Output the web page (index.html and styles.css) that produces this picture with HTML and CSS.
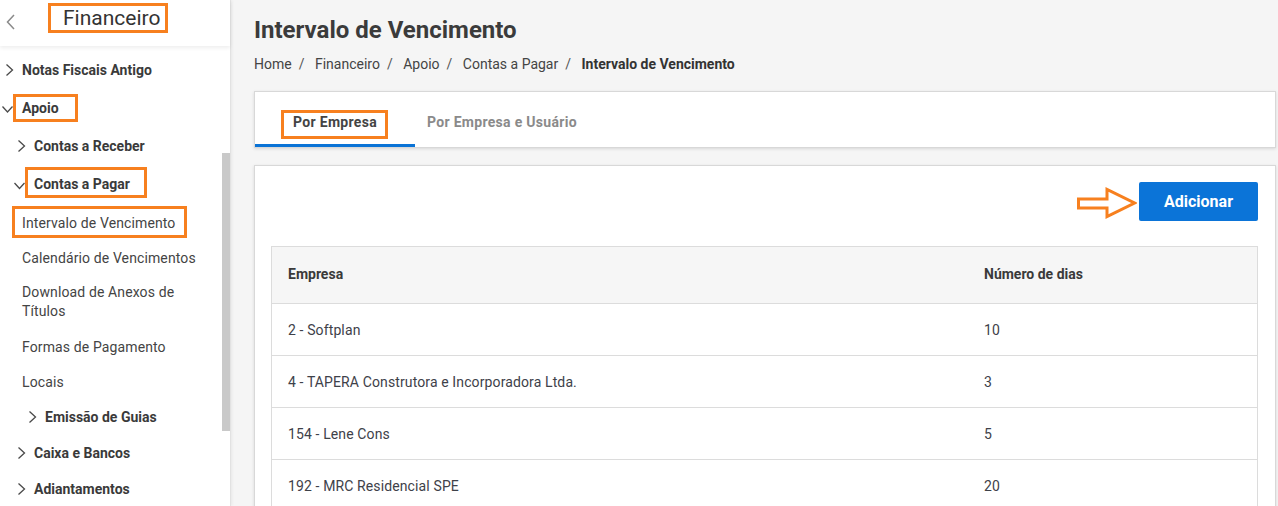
FILE: index.html
```html
<!DOCTYPE html>
<html lang="pt-BR">
<head>
<meta charset="utf-8">
<title>Intervalo de Vencimento</title>
<link rel="stylesheet" href="styles.css">
</head>
<body>
<div class="app">
  <aside class="sidebar">
    <div class="side-head">
      <svg class="back" width="16" height="20" viewBox="0 0 16 20"><path d="M11 3 L4.5 10 L11 17" fill="none" stroke="#8a8a8a" stroke-width="1.5"/></svg>
      <span class="side-title hl hl-fin">Financeiro</span>
    </div>
    <nav class="menu">
      <div class="item lvl1">
        <svg class="chev" width="16" height="16" viewBox="0 0 16 16"><path d="M2.5 2.5 L8.5 8 L2.5 13.5" /></svg>
        <span>Notas Fiscais Antigo</span>
      </div>
      <div class="item lvl1">
        <svg class="chev" width="16" height="16" viewBox="0 0 16 16"><path d="M-1.5 6.5 L3.5 12 L8.5 6.5" /></svg>
        <span class="hl hl-apoio">Apoio</span>
      </div>
      <div class="item lvl2">
        <svg class="chev" width="16" height="16" viewBox="0 0 16 16"><path d="M2.5 2.5 L8.5 8 L2.5 13.5" /></svg>
        <span>Contas a Receber</span>
      </div>
      <div class="item lvl2">
        <svg class="chev" width="16" height="16" viewBox="0 0 16 16"><path d="M-1.5 7 L3.5 12.5 L8.5 7" /></svg>
        <span class="hl hl-pagar">Contas a Pagar</span>
      </div>
      <div class="children">
        <div class="leaf"><span class="hl hl-int">Intervalo de Vencimento</span></div>
        <div class="leaf">Calendário de Vencimentos</div>
        <div class="leaf two">Download de Anexos de<br>Títulos</div>
        <div class="leaf">Formas de Pagamento</div>
        <div class="leaf">Locais</div>
        <div class="item lvl3">
          <svg class="chev" width="16" height="16" viewBox="0 0 16 16"><path d="M2.5 2.5 L8.5 8 L2.5 13.5" /></svg>
          <span>Emissão de Guias</span>
        </div>
      </div>
      <div class="item lvl2 short first-after">
        <svg class="chev" width="16" height="16" viewBox="0 0 16 16"><path d="M2.5 2.5 L8.5 8 L2.5 13.5" /></svg>
        <span>Caixa e Bancos</span>
      </div>
      <div class="item lvl2 short">
        <svg class="chev" width="16" height="16" viewBox="0 0 16 16"><path d="M2.5 2.5 L8.5 8 L2.5 13.5" /></svg>
        <span>Adiantamentos</span>
      </div>
    </nav>
    <div class="scroll-thumb"></div>
  </aside>

  <main class="main">
    <h1 class="title">Intervalo de Vencimento</h1>
    <div class="crumbs">
      <span>Home</span><span class="sep">/</span>
      <span>Financeiro</span><span class="sep">/</span>
      <span>Apoio</span><span class="sep">/</span>
      <span>Contas a Pagar</span><span class="sep">/</span>
      <span class="current">Intervalo de Vencimento</span>
    </div>

    <div class="card tabs">
      <div class="tab active"><span class="hl hl-tab">Por Empresa</span></div>
      <div class="tab">Por Empresa e Usuário</div>
    </div>

    <div class="card content">
      <div class="toolbar">
        <svg class="arrow" width="61" height="32" viewBox="0 0 61 32"><polygon points="2.5,12 31,12 31,2.5 58.5,16 31,29.5 31,21 2.5,21" fill="none" stroke="#f7801f" stroke-width="3" stroke-linejoin="miter"/></svg>
        <button class="btn">Adicionar</button>
      </div>
      <div class="grid">
        <div class="row head">
          <div class="cell">Empresa</div>
          <div class="cell">Número de dias</div>
        </div>
        <div class="row">
          <div class="cell">2 - Softplan</div>
          <div class="cell">10</div>
        </div>
        <div class="row">
          <div class="cell">4 - TAPERA Construtora e Incorporadora Ltda.</div>
          <div class="cell">3</div>
        </div>
        <div class="row">
          <div class="cell">154 - Lene Cons</div>
          <div class="cell">5</div>
        </div>
        <div class="row">
          <div class="cell">192 - MRC Residencial SPE</div>
          <div class="cell">20</div>
        </div>
      </div>
    </div>
  </main>
</div>
</body>
</html>
```

FILE: styles.css
```css
* { box-sizing: border-box; }
html, body { margin: 0; padding: 0; }
body {
  font-family: Roboto, "Liberation Sans", Arial, sans-serif;
  font-size: 14px;
  color: #3d3d3d;
  background: #f5f5f5;
  width: 1278px;
  height: 506px;
  overflow: hidden;
}
.app { display: flex; height: 506px; }

/* annotation boxes */
.hl { position: relative; }
.hl::after {
  content: "";
  position: absolute;
  border: 3px solid #f7801f;
  pointer-events: none;
}
.hl-fin::after { top: -3px; bottom: -3px; left: -15px; right: -8px; }
.hl-apoio::after { top: -6px; bottom: -6px; left: -9px; right: -19px; }
.hl-pagar::after { top: -9px; bottom: -6px; left: -9px; right: -17px; }
.hl-int::after { top: -9px; bottom: -7px; left: -10px; right: -12px; }
.hl-tab::after { top: -4px; bottom: -9px; left: -12px; right: -11px; }

/* sidebar */
.sidebar {
  position: relative;
  width: 231px;
  flex: 0 0 231px;
  background: #fff;
  border-right: 1px solid #e2e2e2;
  box-shadow: 1px 0 3px rgba(0,0,0,0.06);
  z-index: 1;
}
.side-head {
  height: 46px;
  display: flex;
  align-items: center;
  padding-left: 3px;
  box-shadow: 0 2px 4px rgba(0,0,0,0.07);
}
.back { margin-top: -2px; }
.side-title {
  font-size: 21px;
  color: #333;
  margin-left: 44px;
  margin-top: -11px;
  line-height: 24px;
}
.menu { padding-top: 5px; }
.item {
  display: flex;
  align-items: center;
  height: 38px;
  font-weight: 700;
  color: #3a3a3a;
}
.item.short { height: 36px; }
.item.first-after { margin-top: 1px; }
.chev { flex: 0 0 16px; margin-right: 2px; overflow: visible; }
.chev path { fill: none; stroke: #4a4a4a; stroke-width: 1.3; }
.lvl1 { padding-left: 4px; }
.lvl2 { padding-left: 16px; }
.lvl3 { padding-left: 27px; height: 35px; }
.children { padding-top: 2px; }
.leaf {
  padding: 8px 0 8px 22px;
  line-height: 19px;
  color: #444;
  letter-spacing: 0.12px;
}
.leaf:not(.two) { padding-top: 9px; padding-bottom: 7px; }

.scroll-thumb {
  position: absolute;
  left: 222px;
  top: 153px;
  width: 8px;
  height: 278px;
  background: #c9c9c9;
}

/* main */
.main {
  flex: 1;
  padding: 16px 2px 0 23px;
  min-width: 0;
}
.title {
  margin: 0;
  font-size: 24px;
  line-height: 28px;
  font-weight: 700;
  color: #3b3b3b;
}
.crumbs {
  margin-top: 10px;
  line-height: 20px;
  color: #444;
}
.crumbs .sep { margin: 0 7px; color: #555; }
.crumbs .current { font-weight: 700; color: #333; }

.card {
  background: #fff;
  border: 1px solid #d8d8d8;
  box-shadow: 0 1px 3px rgba(0,0,0,0.12);
}
.tabs {
  margin-top: 17px;
  display: flex;
  height: 57px;
}
.tab {
  min-width: 160px;
  height: 55px;
  padding: 8px 12px 0;
  display: flex;
  align-items: center;
  justify-content: center;
  font-weight: 700;
  color: #8a8a8a;
  letter-spacing: 0.3px;
  border-bottom: 3px solid transparent;
}
.tab.active { color: #444; border-bottom-color: #0a73d6; }

.content {
  margin-top: 17px;
  padding: 16px 17px 0 16px;
  height: 360px;
}
.toolbar {
  display: flex;
  justify-content: flex-end;
  align-items: center;
}
.arrow { margin-right: 2px; margin-top: 2px; }
.btn {
  height: 39px;
  width: 119px;
  border: 0;
  border-radius: 2px;
  background: #0b74d8;
  color: #fff;
  font-family: Roboto, "Liberation Sans", Arial, sans-serif;
  font-size: 16px;
  font-weight: 700;
}
.grid {
  margin-top: 25px;
  border: 1px solid #dcdcdc;
  border-bottom: 0;
}
.row {
  display: grid;
  grid-template-columns: 696px 1fr;
  height: 52px;
  border-bottom: 1px solid #dcdcdc;
  align-items: center;
  color: #3e4149;
  letter-spacing: 0.12px;
}
.row.head {
  height: 57px;
  background: #f6f6f6;
  font-weight: 700;
  color: #3a3a3a;
  padding-bottom: 2px;
  letter-spacing: 0;
}
.cell { padding: 0 16px; }
```
